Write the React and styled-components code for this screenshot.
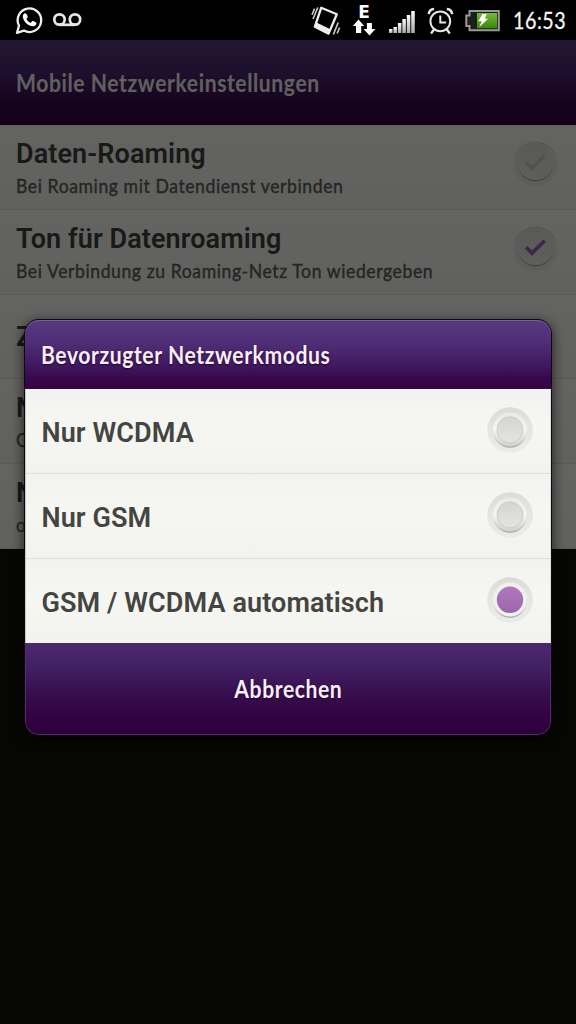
import styled, { createGlobalStyle } from 'styled-components'

const GlobalStyle = createGlobalStyle`
    * {
        box-sizing: border-box;
    }
    body {
        margin: 0;
        background: #11110c;
    }
    p {
        margin: 0;
    }
`

const Phone = styled.div`
    position: relative;
    width: 576px;
    height: 1024px;
    overflow: hidden;
    background: #11110c;
    font-family: Roboto, sans-serif;
`

const StatusBar = styled.div`
    display: flex;
    align-items: flex-start;
    justify-content: space-between;
    height: 40px;
    background: #000;
    svg {
        display: block;
    }
`

const IconGroup = styled.div`
    display: flex;
    height: 40px;
`

const Network = styled.div`
    width: 24px;
    margin: 0 5px 0 10px;
    padding-top: 4px;
    text-align: center;
    color: #fff;
    font: 700 17px/17px 'DejaVu Sans', sans-serif;
    svg {
        margin-top: -3px;
    }
`

/* narrow lettering, squeezed from the left edge */
const Narrow = styled.span`
    display: inline-block;
    font-family: Lato, sans-serif;
    letter-spacing: 0.66px;
    white-space: nowrap;
    transform: scaleX(${(p) => p.$squeeze || 0.88});
    transform-origin: ${(p) => p.$origin || 'left'} center;
`

const Clock = styled.div`
    width: 64px;
    padding-left: 1px;
    font-size: 24px;
    line-height: 40px;
    color: #f4f4f4;
    -webkit-text-stroke: 0.3px #f4f4f4;
`

const TitleBar = styled.div`
    display: flex;
    align-items: center;
    height: 85px;
    padding: 0 16px;
    background: linear-gradient(#57397f, #4a2670 40%, #380a4c 75%, #35003c);
    color: #f2f0ea;
    font-size: 24px;
    font-weight: 700;
`

const SettingRow = styled.div`
    display: flex;
    align-items: center;
    justify-content: space-between;
    height: ${(p) => p.$height || 85}px;
    padding: 0 18px 0 16px;
    background: linear-gradient(#f8f8f4, #f4f4f0 60%, #f1f1ed);
    border-bottom: 1px solid #e2e2de;
    svg {
        margin-bottom: 7px;
    }
`

const SettingText = styled.div`
    padding-top: 3px;
`

const SettingTitle = styled.p`
    font-size: 27px;
    font-weight: 600;
    line-height: 34px;
    letter-spacing: 0.1px;
    color: #40403d;
    white-space: nowrap;
`

const Summary = styled.p`
    height: 29px;
    line-height: 28px;
    font-size: 20px;
    color: #5c5c58;
    -webkit-text-stroke: 0.4px #5c5c58;
`

const Scrim = styled.div`
    position: absolute;
    top: 40px;
    left: 0;
    width: 576px;
    height: 984px;
    padding: 280px 25px 0;
    background: rgba(0, 0, 0, 0.6);
`

const Dialog = styled.div`
    height: 415px;
    border-radius: 14px;
    overflow: hidden;
    box-shadow: 0 0 0 1px #100818, 0 3px 12px 2px rgba(0, 0, 0, 0.6);
`

const DialogHeader = styled.div`
    display: flex;
    align-items: center;
    height: 69px;
    padding: 0 16px;
    border-radius: 14px 14px 0 0;
    background: linear-gradient(#57397f, #512f78 30%, #401a60 65%, #360547 88%, #340645);
    box-shadow: inset 0 1px 0 #76609a;
    color: #fbeefb;
    font-size: 24px;
    font-weight: 700;
    text-shadow: 0 1px 2px #1c0428;
`

const Option = styled.div`
    display: flex;
    align-items: center;
    justify-content: space-between;
    height: ${(p) => p.$height || 85}px;
    padding: 3px 17px 0 15.5px;
    border: solid #dededb;
    border-width: 0 1px ${(p) => (p.$last ? 0 : 1)}px;
    border-left-color: #c4c4c0;
    background: linear-gradient(#f2f2ef, #f6f6f3 45%, #f2f3ee);
    color: #444541;
    font-size: 27px;
    font-weight: 600;
    letter-spacing: 0.1px;
    svg {
        margin-bottom: 6px;
    }
`

const CancelButton = styled.button`
    display: flex;
    align-items: center;
    justify-content: center;
    width: 100%;
    height: 92px;
    padding: 0 0 2px;
    border: 1px solid #4d335c;
    border-top-color: #482c60;
    border-radius: 0 0 14px 14px;
    background: linear-gradient(#4c286e, #411d61 30%, #38104f 52%, #330242 80%, #2c003a);
    color: #fbeefb;
    font-size: 24px;
    font-weight: 700;
    text-shadow: 0 1px 2px #1c0428;
`

function WhatsApp() {
    return (
        <svg width="50" height="40" viewBox="0 0 50 40">
            <path d="M17 32.8 19 25.7A11.8 11.8 0 1 1 23.9 30.6Z" fill="none" stroke="#eee" strokeWidth="2.3" strokeLinejoin="round" />
            <path d="M25.2 13.2c-1.1 0-2.5 1.4-2.4 3.3.2 5 6 10 10.5 9.7 1.7-.1 3.2-1.6 3.2-3 0-.7-3.3-2.4-4-2.2-.7.2-1.2 1.8-1.9 1.8-1.1 0-4-2.6-4.1-3.8 0-.7 1.3-1.3 1.3-2 0-.7-1.3-3.8-2.6-3.8Z" fill="#fff" />
        </svg>
    )
}

function Voicemail() {
    return (
        <svg width="36" height="40" viewBox="50 0 36 40">
            <g fill="none" stroke="#e8e8e8" strokeWidth="2.7">
                <circle cx="59.5" cy="19.5" r="5.2" />
                <circle cx="75" cy="19.5" r="5.2" />
                <path d="M59.5 24.8H75" />
            </g>
        </svg>
    )
}

function Vibrate() {
    return (
        <svg width="32" height="40" viewBox="310 0 32 40">
            <path d="M321.2 7.8 336.8 14.2 328.6 33.6 314.8 26.8Z" fill="none" stroke="#eee" strokeWidth="2.3" strokeLinejoin="round" />
            <path d="M314.8 26.8 328.6 33.6l1.8-4.4-13.9-6.6Z" fill="#eee" />
            <path d="M317.8 7.5l-4.8 11.5M314.6 8.6l-2.6 6.2M338.2 22.5l-4.8 12M339.6 27.5l-2.5 6" stroke="#ccc" strokeWidth="1.6" />
        </svg>
    )
}

function DataArrows() {
    return (
        <svg width="24" height="18" viewBox="352 19 24 18">
            <path d="M358.5 20.5l5.7 6.5h-3v7h-5.2v-7h-3.2ZM369.5 36.5l-6-6.5h3.4v-6h5v6h3.5Z" fill="#fff" />
        </svg>
    )
}

const bars = [4, 6, 10, 14, 18, 22]

function Signal() {
    return (
        <svg width="42" height="40" viewBox="381 0 42 40">
            <defs>
                <linearGradient id="bar" x2="0" y2="1">
                    <stop offset="0" stopColor="#fff" />
                    <stop offset="1" stopColor="#aaa" />
                </linearGradient>
            </defs>
            {bars.map((h, i) => (
                <rect key={h} x={389 + i * 4.45} y={33 - h} width="3.5" height={h} fill="url(#bar)" />
            ))}
        </svg>
    )
}

function Alarm() {
    return (
        <svg width="40" height="40" viewBox="423 0 40 40">
            <g fill="none" stroke="#e6e6e6" strokeWidth="2">
                <circle cx="440.3" cy="21.3" r="9.9" />
                <path d="M440.3 15.5v7h5.8" />
                <path d="M428.7 14.2c.3-3 2.5-5 5.4-5.2M452.2 14.2c-.3-3-2.5-5-5.4-5.2" strokeWidth="2.5" />
                <path d="M434 29.5l-3 4M446.8 29.5l3 4" strokeWidth="2.3" />
            </g>
        </svg>
    )
}

function Battery() {
    return (
        <svg width="49" height="40" viewBox="463 0 49 40">
            <defs>
                <linearGradient id="charge" x2="0" y2="1">
                    <stop offset="0" stopColor="#75bd32" />
                    <stop offset="1" stopColor="#3c850d" />
                </linearGradient>
            </defs>
            <path d="M469.5 11h29.3v19.3h-29.3v-4.2h-3.2v-10.5h3.2Z" fill="#1c1e1a" stroke="#999" strokeWidth="2" />
            <rect x="477" y="13" width="20" height="15.3" fill="url(#charge)" />
            <path d="M482.5 14h4.2l-1.8 4.8h3.2l-8.7 8.2 2.3-5.7h-3.4Z" fill="#fff" />
        </svg>
    )
}

function Check({ on }) {
    return (
        <svg width="46" height="46" viewBox="0 0 46 46">
            <defs>
                <linearGradient id="knob" x2="0" y2="1">
                    <stop offset="0" stopColor="#dededb" />
                    <stop offset="1" stopColor="#ebebe8" />
                </linearGradient>
                <linearGradient id="knobEdge" x2="0" y2="1">
                    <stop offset="0.5" stopColor="#d8d8d5" />
                    <stop offset="1" stopColor="#a8a8a5" />
                </linearGradient>
            </defs>
            <circle cx="23.5" cy="23" r="22.4" fill="#e8e8e4" />
            <path d="M4 13A22 22 0 0 1 43 13" fill="none" stroke="#cfcfcc" strokeWidth="1" />
            <circle cx="23.5" cy="22" r="18.4" fill="url(#knobEdge)" />
            <circle cx="23.5" cy="20.9" r="18.2" fill="url(#knob)" />
            <path d="M14.1 21.3l5.8 5.8 12.8-12.4" fill="none" stroke={on ? '#9a62b4' : '#cdcdca'} strokeWidth="3.6" />
        </svg>
    )
}

function Radio({ on }) {
    return (
        <svg width="46" height="46" viewBox="0 0 46 46">
            <defs>
                <linearGradient id="ring" x2="0" y2="1">
                    <stop offset="0" stopColor="#dadad6" />
                    <stop offset="0.4" stopColor="#e4e4e0" />
                    <stop offset="1" stopColor="#ebebe7" />
                </linearGradient>
                <linearGradient id="rim" x2="0" y2="1">
                    <stop offset="0.5" stopColor="#e3e3e0" />
                    <stop offset="1" stopColor="#a6a6a3" />
                </linearGradient>
                <linearGradient id="plate" x2="0" y2="1">
                    <stop offset="0" stopColor="#e8e8e5" />
                    <stop offset="0.5" stopColor="#f5f5f3" />
                    <stop offset="1" stopColor="#cfcfcc" />
                </linearGradient>
                <linearGradient id="dot" x2="0" y2="1">
                    <stop offset="0" stopColor="#b277bf" />
                    <stop offset="1" stopColor="#9c68aa" />
                </linearGradient>
                <linearGradient id="off" x2="0" y2="1">
                    <stop offset="0" stopColor="#d4d4d1" />
                    <stop offset="1" stopColor="#e4e4e1" />
                </linearGradient>
            </defs>
            <circle cx="23" cy="23" r="22.8" fill="url(#ring)" />
            <circle cx="23" cy="23.8" r="17" fill="url(#rim)" />
            <circle cx="23" cy="22.5" r="17" fill={on ? '#f0f0ed' : 'url(#plate)'} />
            <circle cx="23" cy="22.8" r={on ? 13.2 : 13} fill={on ? 'url(#dot)' : 'url(#off)'} stroke={on ? 'none' : '#cdcdca'} />
        </svg>
    )
}

function App() {
    return (
        <Phone>
            <GlobalStyle />
            <StatusBar>
                <IconGroup>
                    <WhatsApp />
                    <Voicemail />
                </IconGroup>
                <IconGroup>
                    <Vibrate />
                    <Network>
                        E
                        <DataArrows />
                    </Network>
                    <Signal />
                    <Alarm />
                    <Battery />
                    <Clock><Narrow $squeeze={0.82}>16:53</Narrow></Clock>
                </IconGroup>
            </StatusBar>
            <TitleBar>
                <Narrow>Mobile Netzwerkeinstellungen</Narrow>
            </TitleBar>
            <SettingRow>
                <SettingText>
                    <SettingTitle>Daten-Roaming</SettingTitle>
                    <Summary><Narrow>Bei Roaming mit Datendienst verbinden</Narrow></Summary>
                </SettingText>
                <Check />
            </SettingRow>
            <SettingRow>
                <SettingText>
                    <SettingTitle>Ton für Datenroaming</SettingTitle>
                    <Summary><Narrow>Bei Verbindung zu Roaming-Netz Ton wiedergeben</Narrow></Summary>
                </SettingText>
                <Check on />
            </SettingRow>
            <SettingRow $height={84}>
                <SettingTitle>Z</SettingTitle>
            </SettingRow>
            <SettingRow>
                <SettingText>
                    <SettingTitle>N</SettingTitle>
                    <Summary><Narrow>G</Narrow></Summary>
                </SettingText>
            </SettingRow>
            <SettingRow>
                <SettingText>
                    <SettingTitle>N</SettingTitle>
                    <Summary><Narrow>o</Narrow></Summary>
                </SettingText>
            </SettingRow>
            <Scrim>
                <Dialog>
                    <DialogHeader>
                        <Narrow>Bevorzugter Netzwerkmodus</Narrow>
                    </DialogHeader>
                    <Option>
                        Nur WCDMA
                        <Radio />
                    </Option>
                    <Option>
                        Nur GSM
                        <Radio />
                    </Option>
                    <Option $height={84} $last>
                        GSM / WCDMA automatisch
                        <Radio on />
                    </Option>
                    <CancelButton>
                        <Narrow $origin="center">Abbrechen</Narrow>
                    </CancelButton>
                </Dialog>
            </Scrim>
        </Phone>
    )
}

export default App
